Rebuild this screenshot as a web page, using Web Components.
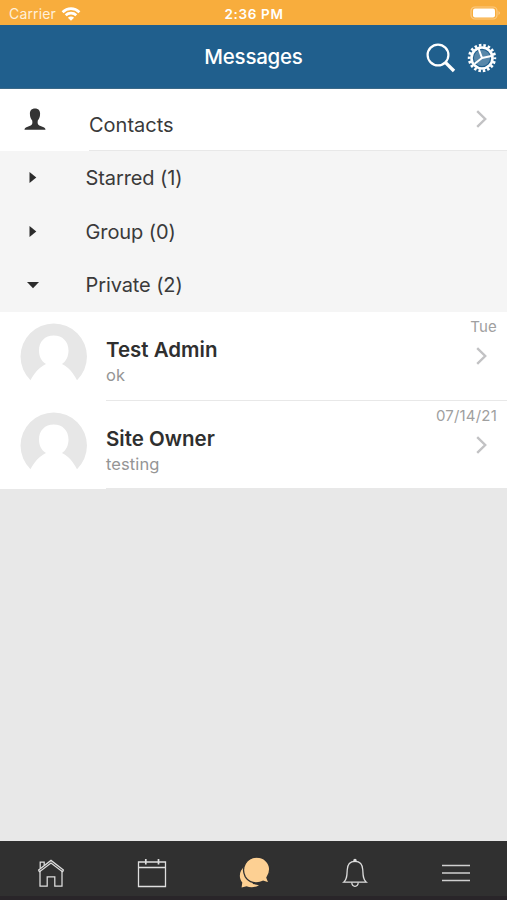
<!DOCTYPE html>
<html lang="en">
<head>
<meta charset="utf-8">
<title>Messages</title>
<style>
    html, body {
        margin: 0;
        height: 100%;
        overflow: hidden;
    }
    body {
        font-family: Inter, "Liberation Sans", sans-serif;
        color: #3a3a3a;
    }
</style>
</head>
<body>
<messages-app></messages-app>

<script>
// Every icon of the app, drawn in its own box
const ICONS = {
    wifi: `<svg width="20" height="16" viewBox="0 0 20 16" fill="none" stroke="#fff" stroke-width="2.7">
        <path d="M1.6 6.2C6.4 1.5 13.6 1.5 18.4 6.2"/>
        <path d="M4.7 9.2c3-2.8 7.6-2.8 10.6 0"/>
        <path d="M10 14.8L6.9 11.7c1.8-1.6 4.4-1.6 6.2 0z" fill="#fff" stroke="none"/>
    </svg>`,
    battery: `<svg width="32" height="15" viewBox="0 0 32 15">
        <rect x="1" y="1" width="26" height="12" rx="4" fill="none" stroke="#fbcb85" stroke-width="1.2"/>
        <rect x="3" y="2.5" width="22" height="9" rx="2" fill="#fff"/>
        <path d="M28.5 5c2 1 2 3 0 4z" fill="#fbcb85"/>
    </svg>`,
    search: `<svg width="30" height="30" viewBox="0 0 30 30" fill="none" stroke="#fff">
        <circle cx="12" cy="12" r="10.4" stroke-width="2.2"/>
        <path d="M19.6 19.6L28 28" stroke-width="3.4"/>
    </svg>`,
    gear: `<svg width="30" height="30" viewBox="-15 -15 30 30" fill="none" stroke="#fff">
        <circle r="12.8" stroke-width="2.8" stroke-dasharray="2.5 1.968" stroke-dashoffset="1.25"/>
        <circle r="10.5" stroke-width="2.6"/>
        <circle r="8" fill="#fff" fill-opacity=".25" stroke="none"/>
        <path d="M0 0L-3.3 -9M0 0L9.400 -2M0 0L-7.400 5.700" stroke-width="2"/>
    </svg>`,
    person: `<svg width="22" height="23" viewBox="0 0 22 23" fill="#333">
        <path d="M11 .4c3.5 0 5.2 2.2 5.1 5.3 0 3-1 5.4-2.3 6.8-.5 2.5 0 4.3 1.5 5l4.3 1.700c1.300.5 1.800 1.400 1.900 2.600H.5c.1-1.200.6-2.100 1.900-2.600l4.300-1.700c1.500-.7 2-2.500 1.500-5C6.900 11.100 5.900 8.700 5.900 5.700 5.800 2.600 7.500.4 11 .4z"/>
    </svg>`,
    right: `<svg width="12" height="14" viewBox="0 0 12 14"><path d="M2.5 1L9.300 6.500 2.500 12z" fill="#2c2c2c"/></svg>`,
    down: `<svg width="12" height="14" viewBox="0 0 12 14"><path d="M0 4H12L6 10.200z" fill="#2c2c2c"/></svg>`,
    chevron: `<svg width="11" height="18" viewBox="0 0 11 18"><path d="M1.200 1.200L9.200 9 1.200 16.800" fill="none" stroke="#c2c2c4" stroke-width="2.400"/></svg>`,
    avatar: `<svg width="68" height="62" viewBox="0 0 68 62">
        <path d="M10.500 58.300A33.200 33.200 0 1 1 57 58.300C53.500 51.500 49.500 46 42 42 46.500 39 48.500 34 48.500 28.500 48.500 19.500 42.500 13.500 33.800 13.500 25 13.500 19 19.500 19 28.500 19 34 21 39 26 42 18.500 46 14 51.500 10.500 58.300z" fill="#e7e7e7"/>
    </svg>`,
    home: `<svg width="30" height="30" viewBox="0 0 30 30" fill="none" stroke="#dedede" stroke-width="1.250">
        <path d="M4 12.500V28.200H11.200V18.800H18.800V28.200H26V12.500"/>
        <path d="M2.300 12.300L15 2.400 27.700 12.300M2.300 12.300L3.600 13.700 15 5 26.400 13.700 27.700 12.300"/>
        <path d="M4.200 10.500V4H8.200V7.200"/>
    </svg>`,
    calendar: `<svg width="30" height="30" viewBox="0 0 30 30" fill="none" stroke="#dedede" stroke-width="1.300">
        <path d="M1.500 4H28.500V28.500H1.500zM1.500 9.500H28.500"/>
        <path d="M8.800 1V6.500M21.500 1V6.500" stroke-width="1.700"/>
    </svg>`,
    chat: `<svg width="34" height="34" viewBox="0 0 34 34" fill="#fdd093">
        <path d="M3.600 31.600L4.300 26.500C.2 21.500 1.300 14 7 10.200L15 28l6 1.200C16.800 31.600 12.300 31.800 8.600 30.300z"/>
        <path d="M18.700 1.200C25.900 1.200 31.700 6.500 31.700 13.300 31.700 16.800 30.500 19.500 28.900 21.600L31 27.100 25 25.300C18.500 28.500 10.600 26.500 7.200 20.600 2.600 11.500 8.500 1.200 18.700 1.200z" stroke="#303030" stroke-width="1.300"/>
    </svg>`,
    bell: `<svg width="28" height="32" viewBox="0 0 28 32" fill="none" stroke="#dedede" stroke-width="1.250">
        <path d="M2.700 25.200H25.300C22 22.500 22 18.500 21.800 13 21.600 7.500 18.700 4.400 14 4.400S6.400 7.500 6.200 13C6 18.500 6 22.500 2.700 25.200z"/>
        <path d="M10.800 25.500C11 30.500 17 30.500 17.200 25.500"/>
        <circle cx="14" cy="3.400" r="1.100" fill="#dedede"/>
    </svg>`,
    menu: `<svg width="28" height="20" viewBox="0 0 28 20" fill="none" stroke="#cfcfcf" stroke-width="1.500">
        <path d="M0 2.500H28M0 10H28M0 17.500H28"/>
    </svg>`
};

class AppIcon extends HTMLElement {
    constructor() {
        super();
        this.shadowObj = this.attachShadow({ mode: 'open' });
    }

    connectedCallback() {
        this.shadowObj.innerHTML = `
        <style>
            :host { display: block; flex: none; }
            svg { display: block; }
        </style>
        ${ICONS[this.getAttribute('name')]}`;
    }
}

class StatusBar extends HTMLElement {
    constructor() {
        super();
        this.attachShadow({ mode: 'open' }).innerHTML = `
        <style>
            :host {
                display: grid;
                grid-template-columns: 1fr auto 1fr;
                align-items: center;
                height: 25px;
                padding: 2px 5px 0 9px;
                box-sizing: border-box;
                background: #f8ad3d;
                color: #fff;
                font-size: 14px;
                line-height: 20px;
            }
            .carrier { display: flex; align-items: center; gap: 5px; color: #fff0da; letter-spacing: .15px; }
            .time { margin-right: 3px; font-weight: 600; letter-spacing: .65px; font-size: 13.5px; }
            .battery { justify-self: end; }
        </style>
        <div class="carrier"><slot name="carrier"></slot><app-icon name="wifi"></app-icon></div>
        <div class="time"><slot></slot></div>
        <app-icon class="battery" name="battery"></app-icon>`;
    }
}

class NavHeader extends HTMLElement {
    constructor() {
        super();
        this.attachShadow({ mode: 'open' }).innerHTML = `
        <style>
            :host {
                display: grid;
                grid-template-columns: 1fr auto 1fr;
                align-items: center;
                height: 64px;
                padding: 0 10px;
                box-sizing: border-box;
                background: #205f8d;
                border-bottom: 1px solid #3b6988;
                color: #fff;
            }
            .title { grid-column: 2; font-size: 20.5px; font-weight: 500; letter-spacing: -.25px; }
            .actions { display: flex; justify-content: flex-end; gap: 11px; padding-top: 2px; }
        </style>
        <div class="title"><slot></slot></div>
        <div class="actions">
            <app-icon name="search"></app-icon>
            <app-icon name="gear"></app-icon>
        </div>`;
    }
}

class ContactsRow extends HTMLElement {
    constructor() {
        super();
        this.attachShadow({ mode: 'open' }).innerHTML = `
        <style>
            :host {
                display: flex;
                height: 62px;
                padding-left: 24px;
                box-sizing: border-box;
                background: #fff;
                font-size: 20px;
            }
            .person { padding-top: 19px; }
            .body {
                flex: 1;
                display: flex;
                justify-content: space-between;
                margin-left: 43px;
                padding-right: 20px;
                border-bottom: 1px solid #e8e8e8;
            }
            .label { padding-top: 24px; line-height: 24px; }
            .chevron { padding-top: 21px; }
        </style>
        <app-icon class="person" name="person"></app-icon>
        <div class="body">
            <div class="label"><slot></slot></div>
            <app-icon class="chevron" name="chevron"></app-icon>
        </div>`;
    }
}

class GroupRow extends HTMLElement {
    constructor() {
        super();
        this.shadowObj = this.attachShadow({ mode: 'open' });
    }

    connectedCallback() {
        const icon = this.hasAttribute('open') ? 'down' : 'right';
        this.shadowObj.innerHTML = `
        <style>
            :host {
                display: flex;
                align-items: center;
                gap: 46.5px;
                flex: 1;
                padding-left: 27px;
                background: #f5f5f5;
                font-size: 20px;
                letter-spacing: -.1px;
            }
        </style>
        <app-icon name="${icon}"></app-icon>
        <div><slot></slot></div>`;
    }
}

class ChatRow extends HTMLElement {
    constructor() {
        super();
        this.attachShadow({ mode: 'open' }).innerHTML = `
        <style>
            :host {
                display: flex;
                height: 88.5px;
                padding-left: 20px;
                box-sizing: border-box;
                background: #fff;
            }
            .avatar { padding-top: 10px; }
            .body {
                flex: 1;
                display: flex;
                justify-content: space-between;
                margin-left: 18px;
                padding-right: 10px;
                border-bottom: 1px solid #e8e8e8;
            }
            .texts { padding-top: 26px; }
            .name { font-size: 20.5px; line-height: 24px; font-weight: 600; color: #2f2f2f; }
            .preview { margin-top: 3px; font-size: 16.5px; line-height: 20px; color: #959595; letter-spacing: .1px; }
            .side {
                display: flex;
                flex-direction: column;
                align-items: flex-end;
                gap: 11px;
                padding-top: 6px;
                font-size: 15px;
                line-height: 18px;
                color: #a0a0a0;
                letter-spacing: .2px;
            }
            .chevron { margin-right: 10px; }
        </style>
        <app-icon class="avatar" name="avatar"></app-icon>
        <div class="body">
            <div class="texts">
                <div class="name"><slot name="name"></slot></div>
                <div class="preview"><slot></slot></div>
            </div>
            <div class="side">
                <slot name="date"></slot>
                <app-icon class="chevron" name="chevron"></app-icon>
            </div>
        </div>`;
    }
}

class TabBar extends HTMLElement {
    constructor() {
        super();
        this.attachShadow({ mode: 'open' }).innerHTML = `
        <style>
            :host {
                display: grid;
                grid-template-columns: repeat(5, 1fr);
                place-items: center;
                height: 59px;
                padding-top: 8px;
                box-sizing: border-box;
                background: #303030;
                border-bottom: 4px solid #292529;
            }
            .current { margin-left: 3px; }
        </style>
        <app-icon name="home"></app-icon>
        <app-icon name="calendar"></app-icon>
        <app-icon class="current" name="chat"></app-icon>
        <app-icon name="bell"></app-icon>
        <app-icon name="menu"></app-icon>`;
    }
}

class MessagesApp extends HTMLElement {
    constructor() {
        super();
        this.attachShadow({ mode: 'open' }).innerHTML = `
        <style>
            :host {
                display: flex;
                flex-direction: column;
                width: 507px;
                height: 900px;
                background: #e8e8e8;
            }
            .groups { display: flex; flex-direction: column; height: 161px; }
            main { flex: 1; }
        </style>
        <status-bar><span slot="carrier">Carrier</span>2:36 PM</status-bar>
        <nav-header>Messages</nav-header>
        <main>
            <contacts-row>Contacts</contacts-row>
            <div class="groups">
                <group-row>Starred (1)</group-row>
                <group-row>Group (0)</group-row>
                <group-row open>Private (2)</group-row>
            </div>
            <chat-row>
                <span slot="name">Test Admin</span>
                <span slot="date">Tue</span>
                ok
            </chat-row>
            <chat-row>
                <span slot="name">Site Owner</span>
                <span slot="date">07/14/21</span>
                testing
            </chat-row>
        </main>
        <tab-bar></tab-bar>`;
    }
}

customElements.define('app-icon', AppIcon);
customElements.define('status-bar', StatusBar);
customElements.define('nav-header', NavHeader);
customElements.define('contacts-row', ContactsRow);
customElements.define('group-row', GroupRow);
customElements.define('chat-row', ChatRow);
customElements.define('tab-bar', TabBar);
customElements.define('messages-app', MessagesApp);
</script>
</body>
</html>
